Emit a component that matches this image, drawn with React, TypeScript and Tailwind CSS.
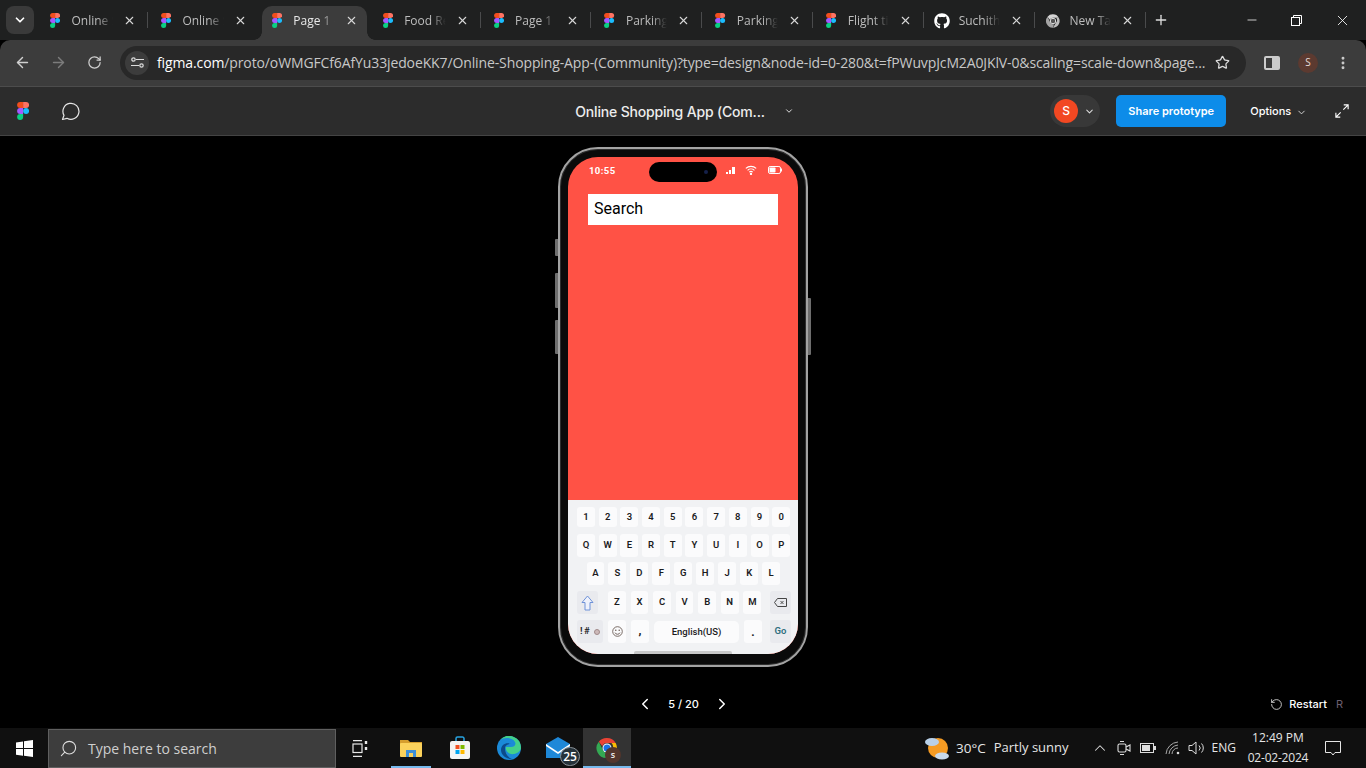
import React from "react";
import { ChevronDown, ChevronLeft, ChevronRight, X, Plus, Minus, ArrowLeft, ArrowRight, RotateCw, Star, MoreVertical, Search, ChevronUp, RotateCcw } from "lucide-react";
import { FaGithub } from "react-icons/fa";

const seg = "font-['Open_Sans','Noto_Sans',sans-serif]";

function FigmaLogo({ size = 16 }: { size?: number }) {
  return (
    <svg width={size * 0.68} height={size} viewBox="0 0 38 57" className="shrink-0">
      <path fill="#f24e1e" d="M19 0H9.5a9.5 9.5 0 0 0 0 19H19z" />
      <path fill="#ff7262" d="M19 0h9.5a9.5 9.5 0 0 1 0 19H19z" />
      <path fill="#a259ff" d="M19 19H9.5a9.5 9.5 0 0 0 0 19H19z" />
      <circle fill="#1abcfe" cx="28.5" cy="28.5" r="9.5" />
      <path fill="#0acf83" d="M9.5 38H19v9.5A9.5 9.5 0 1 1 9.5 38z" />
    </svg>
  );
}

function ChromeIcon({ size = 16, gray = false }: { size?: number; gray?: boolean }) {
  const a = gray ? "#d4d4d4" : "#ea4335";
  const b = gray ? "#bdbdbd" : "#fbbc04";
  const c = gray ? "#a4a4a4" : "#34a853";
  const d = gray ? "#555555" : "#1a73e8";
  return (
    <svg width={size} height={size} viewBox="0 0 48 48" className="shrink-0">
      <path fill={a} d="M24 4a20 20 0 0 1 17.3 10H24a10 10 0 0 0-9.4 6.6L7.6 11.3A20 20 0 0 1 24 4z" />
      <path fill={b} d="M41.3 14A20 20 0 0 1 24 44l8.7-15A10 10 0 0 0 33 14z" />
      <path fill={c} d="M7.6 11.3 16.3 29A10 10 0 0 0 27 33.6L24 44A20 20 0 0 1 7.6 11.3z" />
      <circle cx="24" cy="24" r="9" fill="#fff" />
      <circle cx="24" cy="24" r="7" fill={d} />
    </svg>
  );
}

const tabs = [
  { t: "Online Shopping", i: "f" },
  { t: "Online Shopping", i: "f" },
  { t: "Page 1 - Figma", i: "f", active: true },
  { t: "Food Recipe", i: "f" },
  { t: "Page 1 - Figma", i: "f" },
  { t: "Parking App", i: "f" },
  { t: "Parking App", i: "f" },
  { t: "Flight ticket", i: "f" },
  { t: "Suchith", i: "g" },
  { t: "New Tab", i: "c" },
];

function Tab({ t, i, active, sep }: { t: string; i: string; active?: boolean; sep: boolean }) {
  return (
    <div className="relative w-[110.9px] h-[34px] shrink-0 flex items-center pl-[13px] pr-[12px] pb-[5px]">
      {active && <div className="absolute inset-x-[3px] top-0 bottom-0 rounded-t-[10px] bg-[#3c3c3c]" />}
      {active && <div className="absolute left-[-5px] bottom-0 w-[8px] h-[8px] bg-[radial-gradient(circle_at_0_0,transparent_7.5px,#3c3c3c_8px)]" />}
      {active && <div className="absolute right-[-5px] bottom-0 w-[8px] h-[8px] bg-[radial-gradient(circle_at_100%_0,transparent_7.5px,#3c3c3c_8px)]" />}
      {sep && <div className="absolute right-0 top-[6px] h-[16px] w-[1px] bg-[#4a4b4c]" />}
      <div className="relative w-[21.5px] shrink-0 flex items-center">
        {i === "f" && <FigmaLogo size={15} />}
        {i === "g" && <FaGithub className="text-[16px] text-white -ml-[3px]" />}
        {i === "c" && <div className="-ml-[3px]"><ChromeIcon size={16} gray /></div>}
      </div>
      <div className={`relative flex-1 min-w-0 overflow-hidden whitespace-nowrap text-[12px] ${active ? "text-[#e8e8e8]" : "text-[#bdbdbd]"} [mask-image:linear-gradient(to_right,black_60%,transparent_95%)]`}>{t}</div>
      <X className="relative w-[13px] h-[13px] shrink-0 ml-[8px] text-[#d8d8d8]" strokeWidth={2} />
    </div>
  );
}

function Key({ w, h, bg = "bg-[#fbfbfc]", children, cls = "" }: { w: string; h: string; bg?: string; children: React.ReactNode; cls?: string }) {
  return <div className={`${w} ${h} ${bg} ${cls} shrink-0 rounded-[3px] flex items-center justify-center text-[9.5px] font-semibold text-[#1c1c1e]`}>{children}</div>;
}

function Keyboard() {
  const num = "1234567890".split("");
  const r1 = "QWERTYUIOP".split("");
  const r2 = "ASDFGHJKL".split("");
  const r3 = "ZXCVBNM".split("");
  return (
    <div className="bg-[#f1f2f4] h-[154px] flex flex-col pt-[7px] font-['Roboto',sans-serif]">
      <div className="flex pl-[9px] gap-[3.7px] h-[20px]">{num.map(k => <Key key={k} w="w-[18px]" h="h-[20px]">{k}</Key>)}</div>
      <div className="flex pl-[9px] gap-[3.7px] h-[23px] mt-[7px]">{r1.map(k => <Key key={k} w="w-[18px]" h="h-[23px]">{k}</Key>)}</div>
      <div className="flex pl-[18.5px] gap-[4.4px] h-[23px] mt-[5px]">{r2.map(k => <Key key={k} w="w-[17.6px]" h="h-[23px]">{k}</Key>)}</div>
      <div className="flex pl-[9px] h-[23px] mt-[6px]">
        <Key w="w-[21px]" h="h-[23px]" bg="bg-[#e9eaee]">
          <svg width="13" height="16" viewBox="0 0 13 16"><path d="M6.5 1 12 7.500H9V15H4V7.500H1z" fill="#eef1fb" stroke="#6f92d8" strokeWidth="1" strokeLinejoin="round" /></svg>
        </Key>
        <div className="flex gap-[4.9px] ml-[10px]">{r3.map(k => <Key key={k} w="w-[17.7px]" h="h-[23px]">{k}</Key>)}</div>
        <Key w="w-[21px]" h="h-[23px]" bg="bg-[#e9eaee]" cls="ml-[8.5px]">
          <svg width="13" height="9" viewBox="0 0 13 9"><path d="M3.500.5h9v8h-9L.5 4.500z" fill="none" stroke="#444" strokeWidth="1" /><path d="M6.500 3l3 3M9.500 3l-3 3" stroke="#444" strokeWidth=".9" /></svg>
        </Key>
      </div>
      <div className="flex pl-[9px] h-[23px] mt-[6px]">
        <Key w="w-[26px]" h="h-[23px]" bg="bg-[#e9eaee]" cls="gap-[3px]">
          <span className="tracking-[1.5px]">!#</span>
          <span className="w-[6px] h-[6px] rounded-full border border-[#a08a8a] bg-[#cdb9b9]" />
        </Key>
        <Key w="w-[18px]" h="h-[23px]" cls="ml-[5px]">
          <svg width="11" height="11" viewBox="0 0 11 11"><circle cx="5.500" cy="5.500" r="4.800" fill="none" stroke="#5a4a42" strokeWidth=".8" /><circle cx="3.800" cy="4.300" r=".7" fill="#5a4a42" /><circle cx="7.200" cy="4.300" r=".7" fill="#5a4a42" /><path d="M3 6.600a2.700 2.700 0 0 0 5 0" fill="none" stroke="#5a4a42" strokeWidth=".8" /></svg>
        </Key>
        <Key w="w-[18px]" h="h-[23px]" cls="ml-[5px] !font-black !text-[11px] pb-[1px]">,</Key>
        <Key w="w-[85px]" h="h-[22px]" cls="ml-[5px] mt-[1px] rounded-[5px] !font-medium !text-[9.5px]">English(US)</Key>
        <Key w="w-[18px]" h="h-[23px]" cls="ml-[5px] !font-black !text-[11px] pt-[3px]">.</Key>
        <Key w="w-[21px]" h="h-[23px]" bg="bg-[#e9eaee]" cls="ml-[8px] !text-[#2f6f7e]">Go</Key>
      </div>
      <div className="mt-auto mx-auto w-[98px] h-[3px] rounded-t-[2px] bg-[#c8c8c8]" />
    </div>
  );
}

function Phone() {
  return (
    <div className="relative w-[250px] h-[520px] rounded-[40px] border-[2px] border-[#a3a3a3] bg-[#0a0a0a] p-[8px] shadow-[inset_0_0_0_1px_#2e2e2e]">
      <div className="absolute left-[-5px] top-[90px] w-[3px] h-[17px] bg-[#6e6e6e] rounded-l-[1px]" />
      <div className="absolute left-[-5px] top-[124px] w-[3px] h-[35px] bg-[#6e6e6e] rounded-l-[1px]" />
      <div className="absolute left-[-5px] top-[171px] w-[3px] h-[34px] bg-[#6e6e6e] rounded-l-[1px]" />
      <div className="absolute right-[-5px] top-[149px] w-[3px] h-[57px] bg-[#6e6e6e] rounded-r-[1px]" />
      <div className="relative w-[230px] h-[497px] rounded-[30px] overflow-hidden flex flex-col bg-[#ff5245]">
        <div className="h-[37px] flex items-start relative shrink-0">
          <span className="ml-[21px] mt-[8px] text-[9.5px] leading-[12px] font-bold text-white font-['Roboto',sans-serif] tracking-[0.4px]">10:55</span>
          <div className="absolute left-[81px] top-[5px] w-[68px] h-[20px] rounded-full bg-black flex items-center justify-end pr-[9px]">
            <div className="w-[4px] h-[4px] rounded-full bg-[#15214a]" />
          </div>
          <div className="ml-auto mr-[16px] mt-[8px] flex items-center">
            <svg width="9" height="8" viewBox="0 0 9 8" fill="#fff"><path d="M0 6h2v2H0zM3 4h2v4H3zM6 1h3v7H6z" /></svg>
            <svg className="ml-[10px]" width="12" height="10" viewBox="0 0 12 10" fill="none" stroke="#fff" strokeWidth="1.100"><path d="M.8 3.400a7.600 7.600 0 0 1 10.400 0M2.600 5.300a5 5 0 0 1 6.800 0M4.300 7.200a2.500 2.500 0 0 1 3.400 0" /><circle cx="6" cy="9" r=".6" fill="#fff" /></svg>
            <svg className="ml-[11px]" width="14" height="8" viewBox="0 0 14 8"><rect x=".5" y=".5" width="12" height="7" rx="1.600" fill="none" stroke="#fff" /><rect x="1.500" y="1.500" width="6" height="5" rx=".8" fill="#fff" /><rect x="13" y="2.500" width="1" height="3" fill="#fff" /></svg>
          </div>
        </div>
        <div className="mx-[20px] w-[190px] h-[31px] bg-white flex items-center pl-[6px] pb-[1px] text-[16px] text-black font-['Roboto',sans-serif] shrink-0">Search</div>
        <div className="flex-1" />
        <Keyboard />
      </div>
    </div>
  );
}

function Taskbar() {
  return (
    <div className={`h-[40px] shrink-0 bg-[#101010] flex items-center text-[#e6e6e6] ${seg}`}>
      <div className="w-[48px] flex justify-center">
        <svg width="17" height="17" viewBox="0 0 17 17" fill="#fff"><path d="M0 2.400 7 1.400v6.700H0zM8 1.300 17 0v8.100H8zM0 9h7v6.700l-7-1zM8 9h9v8l-9-1.300z" /></svg>
      </div>
      <div className="w-[288px] h-[39px] mt-[1px] bg-[#3d3d3d] border border-[#5f5f5f] flex items-center pl-[10px]">
        <Search className="w-[19px] h-[19px] text-[#ddd] -scale-x-100" strokeWidth={1.4} />
        <span className="ml-[10px] text-[14px] text-[#cfcfcf] whitespace-nowrap">Type here to search</span>
      </div>
      <div className="w-[48px] flex justify-center">
        <svg width="17" height="17" viewBox="0 0 17 17" fill="none" stroke="#e8e8e8" strokeWidth="1.200"><path d="M1 .6h9M1 16.400h9" /><rect x="1" y="4" width="9" height="8.500" /><path d="M14 1v3M14 7v3" strokeWidth="2.400" /></svg>
      </div>
      <div className="w-[7px]" />
      <div className="relative w-[40px] h-[40px] flex items-center justify-center">
        <svg width="24" height="20" viewBox="0 0 24 20"><path d="M1 2h8l2 2h12v4H1z" fill="#d69e2e" /><rect x="1" y="5" width="22" height="14" rx="1" fill="#fbd25c" /><path d="M7 19v-7h10v7h-3v-4h-4v4z" fill="#3d8fd8" /></svg>
        <div className="absolute bottom-0 inset-x-0 h-[2px] bg-[#76b9ed]" />
      </div>
      <div className="w-[9px]" />
      <div className="w-[40px] h-[40px] flex items-center justify-center">
        <svg width="20" height="24" viewBox="0 0 20 24"><path d="M6 5V2.500A1.500 1.500 0 0 1 7.500 1h5A1.500 1.500 0 0 1 14 2.500V5" fill="none" stroke="#27a3e0" strokeWidth="1.500" /><rect x="0" y="5" width="20" height="18" rx="2" fill="#f4f4f4" /><rect x="5.500" y="9" width="4" height="4" fill="#f25022" /><rect x="10.500" y="9" width="4" height="4" fill="#7fba00" /><rect x="5.500" y="14" width="4" height="4" fill="#00a4ef" /><rect x="10.500" y="14" width="4" height="4" fill="#ffb900" /></svg>
      </div>
      <div className="w-[9px]" />
      <div className="w-[40px] h-[40px] flex items-center justify-center">
        <svg width="24" height="24" viewBox="0 0 24 24"><circle cx="12" cy="12" r="12" fill="#1b8ad8" /><path d="M24 12A12 12 0 0 0 3 4c4-3 12-3 15 2 1.500 3-1 5-4 5H9c-1 4 3 8 8 7 3-.6 7-3 7-6z" fill="#43d08a" /><path d="M8 12c0-2 2-4 6-4-5-2-10 1-10 6 0 5 5 9 11 9-5-2-7-6-7-11z" fill="#0c4a8a" /></svg>
      </div>
      <div className="w-[9px]" />
      <div className="relative w-[40px] h-[40px] flex items-center justify-center">
        <svg width="24" height="22" viewBox="0 0 24 22" className="-ml-[1px]"><path d="M0 7 12 0l12 7v14H0z" fill="#1e88d8" /><path d="M0 7l12 8 12-8v2L12 17 0 9z" fill="#fff" /></svg>
        <div className="absolute left-[22px] top-[19px] w-[20px] h-[19px] rounded-full bg-[#26323a] border border-[#8a9298] flex items-center justify-center text-[12px] leading-none font-semibold text-white">25</div>
      </div>
      <div className="w-[9px]" />
      <div className="relative w-[48px] h-[40px] bg-[#333] flex items-center justify-center -ml-[4px]">
        <ChromeIcon size={24} />
        <div className="absolute left-[22px] top-[19px] w-[16px] h-[16px] rounded-full bg-[#53362d] flex items-center justify-center text-[9px] font-semibold text-[#eee]">s</div>
        <div className="absolute bottom-0 inset-x-0 h-[2px] bg-[#76b9ed]" />
      </div>
      <div className="w-[294px]" />
      <svg width="24" height="24" viewBox="0 0 24 24">
        <circle cx="13" cy="12" r="10" fill="#f59b23" />
        <ellipse cx="7" cy="6" rx="7" ry="4" fill="#b9d0e8" />
        <ellipse cx="17" cy="20" rx="7" ry="3.500" fill="#c9daeb" />
      </svg>
      <span className="ml-[7px] text-[13.5px] whitespace-nowrap">30°C</span>
      <span className="ml-[8px] text-[13px] whitespace-nowrap">Partly sunny</span>
      <ChevronUp className="ml-[22px] w-[18px] h-[18px] text-[#ddd]" strokeWidth={1.4} />
      <svg className="ml-[8px]" width="14" height="18" viewBox="0 0 14 18" fill="none" stroke="#ddd" strokeWidth="1.100"><rect x="1" y="5" width="8" height="8" rx="1.500" /><path d="m9 8 4-2v6l-4-2M3 2.500h4M3 15.500h4" /></svg>
      <svg className="ml-[9px]" width="16" height="10" viewBox="0 0 16 10"><rect x=".5" y=".5" width="13" height="9" fill="none" stroke="#ddd" /><rect x="2" y="2" width="8" height="6" fill="#ddd" /><rect x="14" y="3" width="2" height="4" fill="#ddd" /></svg>
      <svg className="ml-[9px]" width="16" height="14" viewBox="0 0 16 14" fill="none" stroke="#aaa" strokeWidth="1"><path d="M1 13A13 13 0 0 1 13 1M4 13a10 10 0 0 1 9-9M7 13a6 6 0 0 1 6-6" /><circle cx="13" cy="12" r="1.300" fill="#ddd" stroke="none" /></svg>
      <svg className="ml-[7px]" width="18" height="14" viewBox="0 0 18 14" fill="none" stroke="#ddd" strokeWidth="1"><path d="M1 4.500h3L8 1v12L4 9.500H1zM11 4.500a3.500 3.500 0 0 1 0 5M13.500 2.500a6.500 6.500 0 0 1 0 9" /></svg>
      <span className="ml-[6px] text-[12px]">ENG</span>
      <div className="ml-[12px] flex flex-col items-center text-[12px] leading-[20px] w-[60px] -mt-[1px]">
        <span className="whitespace-nowrap">12:49 PM</span>
        <span className="whitespace-nowrap tracking-[-0.2px]">02-02-2024</span>
      </div>
      <svg className="ml-[17px]" width="16" height="15" viewBox="0 0 16 15" fill="none" stroke="#e6e6e6" strokeWidth="1"><path d="M.5.500h15v11H10L8 14l-2-2.500H.5z" /></svg>
    </div>
  );
}

export default function App() {
  return (
    <div className={`w-[1366px] h-[768px] overflow-hidden flex flex-col bg-black ${seg}`}>
      {/* tab strip */}
      <div className="h-[40px] shrink-0 bg-[#1f2020] flex items-end relative">
        <div className="absolute left-[6px] top-[6px] w-[28px] h-[28px] rounded-[8px] bg-[#3a3a3a] flex items-center justify-center">
          <ChevronDown className="w-[14px] h-[14px] text-white" strokeWidth={3} />
        </div>
        <div className="flex ml-[37px] h-[34px]">
          {tabs.map((t, i) => (
            <Tab key={i} t={t.t} i={t.i} active={t.active} sep={!t.active && i !== 1} />
          ))}
        </div>
        <div className="h-[34px] flex items-center pl-[7px] pb-[6px]"><Plus className="w-[16px] h-[16px] text-[#ddd]" strokeWidth={2} /></div>
        <div className="ml-auto h-[40px] flex items-center pr-[1px]">
          <div className="w-[45px] flex justify-center"><Minus className="w-[14px] h-[14px] text-white" strokeWidth={1.3} /></div>
          <div className="w-[45px] flex justify-center">
            <svg width="11" height="11" viewBox="0 0 11 11" fill="none" stroke="#fff"><rect x=".5" y="2.500" width="8" height="8" /><path d="M2.500 2.500V.5h8v8h-2" /></svg>
          </div>
          <div className="w-[46px] flex justify-center"><X className="w-[17px] h-[17px] text-white" strokeWidth={1.2} /></div>
        </div>
      </div>
      {/* toolbar */}
      <div className="h-[47px] shrink-0 bg-[#3c3c3c] rounded-t-[10px] border-b border-[#4c4c4c] flex items-center pb-[1px]">
        <div className="w-[44px] flex justify-center"><ArrowLeft className="w-[17px] h-[17px] text-[#d0d0d0]" strokeWidth={2} /></div>
        <div className="w-[28px] flex justify-center"><ArrowRight className="w-[17px] h-[17px] text-[#7c7c7c]" strokeWidth={2} /></div>
        <div className="w-[44px] flex justify-center"><RotateCw className="w-[15px] h-[15px] text-[#d0d0d0]" strokeWidth={2} /></div>
        <div className="ml-[4px] w-[1126px] h-[34px] rounded-full bg-[#282828] flex items-center pl-[5px] pr-[16px]">
          <div className="w-[24px] h-[24px] rounded-full bg-[#3c3c3c] flex items-center justify-center">
            <svg width="13" height="11" viewBox="0 0 13 11" fill="none" stroke="#ddd" strokeWidth="1.200"><path d="M5 2.500h8M0 8.500h8" /><circle cx="2.500" cy="2.500" r="1.700" /><circle cx="10.500" cy="8.500" r="1.700" /></svg>
          </div>
          <span className="ml-[8px] text-[14px] text-[#c7c7c7] whitespace-nowrap tracking-[-0.12px]"><span className="text-white">figma.com</span>/proto/oWMGFCf6AfYu33jedoeKK7/Online-Shopping-App-(Community)?type=design&amp;node-id=0-280&amp;t=fPWuvpJcM2A0JKlV-0&amp;scaling=scale-down&amp;page...</span>
          <Star className="ml-auto w-[15px] h-[15px] text-[#ddd]" strokeWidth={2} />
        </div>
        <div className="ml-[18px] w-[16px] h-[14px] rounded-[2px] border-[2px] border-[#ccc] flex justify-end"><div className="w-[6px] bg-[#ccc]" /></div>
        <div className="ml-[18px] w-[20px] h-[20px] rounded-full bg-[#5c3a30] flex items-center justify-center text-[10px] text-[#e6dcd8]">S</div>
        <MoreVertical className="ml-[17px] w-[16px] h-[16px] text-[#ccc]" strokeWidth={2.4} />
      </div>
      {/* figma bar */}
      <div className="h-[49px] shrink-0 bg-[#2c2c2c] border-b border-[#444] flex items-center font-['Inter',sans-serif] text-white">
        <div className="ml-[17px]"><FigmaLogo size={18} /></div>
        <svg className="ml-[32px]" width="19" height="19" viewBox="0 0 19 19" fill="none" stroke="#e6e6e6" strokeWidth="1.200"><path d="M1.500 17.500 3 13.300A8 8 0 1 1 6 16.300z" strokeLinejoin="round" /></svg>
        <span className="ml-[495px] w-[190px] text-[14px] font-medium text-[#ececec] whitespace-nowrap tracking-[-0.17px]">Online Shopping App (Com...</span>
        <ChevronDown className="ml-[19px] w-[10px] h-[10px] text-[#ddd]" strokeWidth={2.4} />
        <div className="ml-[256px] w-[50px] h-[32px] rounded-full bg-[#383838] flex items-center pl-[4px]">
          <div className="w-[24px] h-[24px] rounded-full bg-[#f24822] flex items-center justify-center text-[12px] font-medium">S</div>
          <ChevronDown className="ml-[6px] w-[11px] h-[11px] text-[#ddd]" strokeWidth={2.2} />
        </div>
        <div className="ml-[16px] w-[110px] h-[32px] pt-[1px] rounded-[5px] bg-[#0d8ce9] flex items-center justify-center text-[11px] font-semibold whitespace-nowrap">Share prototype</div>
        <span className="ml-[24px] w-[41px] pt-[1px] text-[11px] font-medium whitespace-nowrap">Options</span>
        <ChevronDown className="ml-[5px] mt-[2px] w-[11px] h-[11px] text-[#ddd]" strokeWidth={2} />
        <svg className="ml-[28px]" width="14" height="14" viewBox="0 0 16 16" fill="none" stroke="#fff" strokeWidth="1.300"><path d="M10 1h5v5M15 1 9.500 6.500M6 15H1v-5M1 15l5.500-5.500" /></svg>
      </div>
      {/* canvas */}
      <div className="flex-1 min-h-0 bg-black flex flex-col items-center pt-[11px] relative font-['Inter',sans-serif]">
        <Phone />
        <div className="mt-[25px] h-[24px] w-full flex items-center relative text-white">
          <div className="ml-[636px] flex items-center">
            <ChevronLeft className="w-[18px] h-[18px]" strokeWidth={2} />
            <span className="ml-[14px] w-[31px] text-center text-[11px] font-medium whitespace-nowrap">5 / 20</span>
            <ChevronRight className="ml-[14px] w-[18px] h-[18px]" strokeWidth={2} />
          </div>
          <div className="ml-auto mr-[23px] flex items-center">
            <RotateCcw className="w-[13px] h-[13px] text-[#ddd]" strokeWidth={1.6} />
            <span className="ml-[6px] text-[11px] font-medium">Restart</span>
            <span className="ml-[9px] text-[11px] text-[#6b5f6f]">R</span>
          </div>
        </div>
      </div>
      <Taskbar />
    </div>
  );
}
